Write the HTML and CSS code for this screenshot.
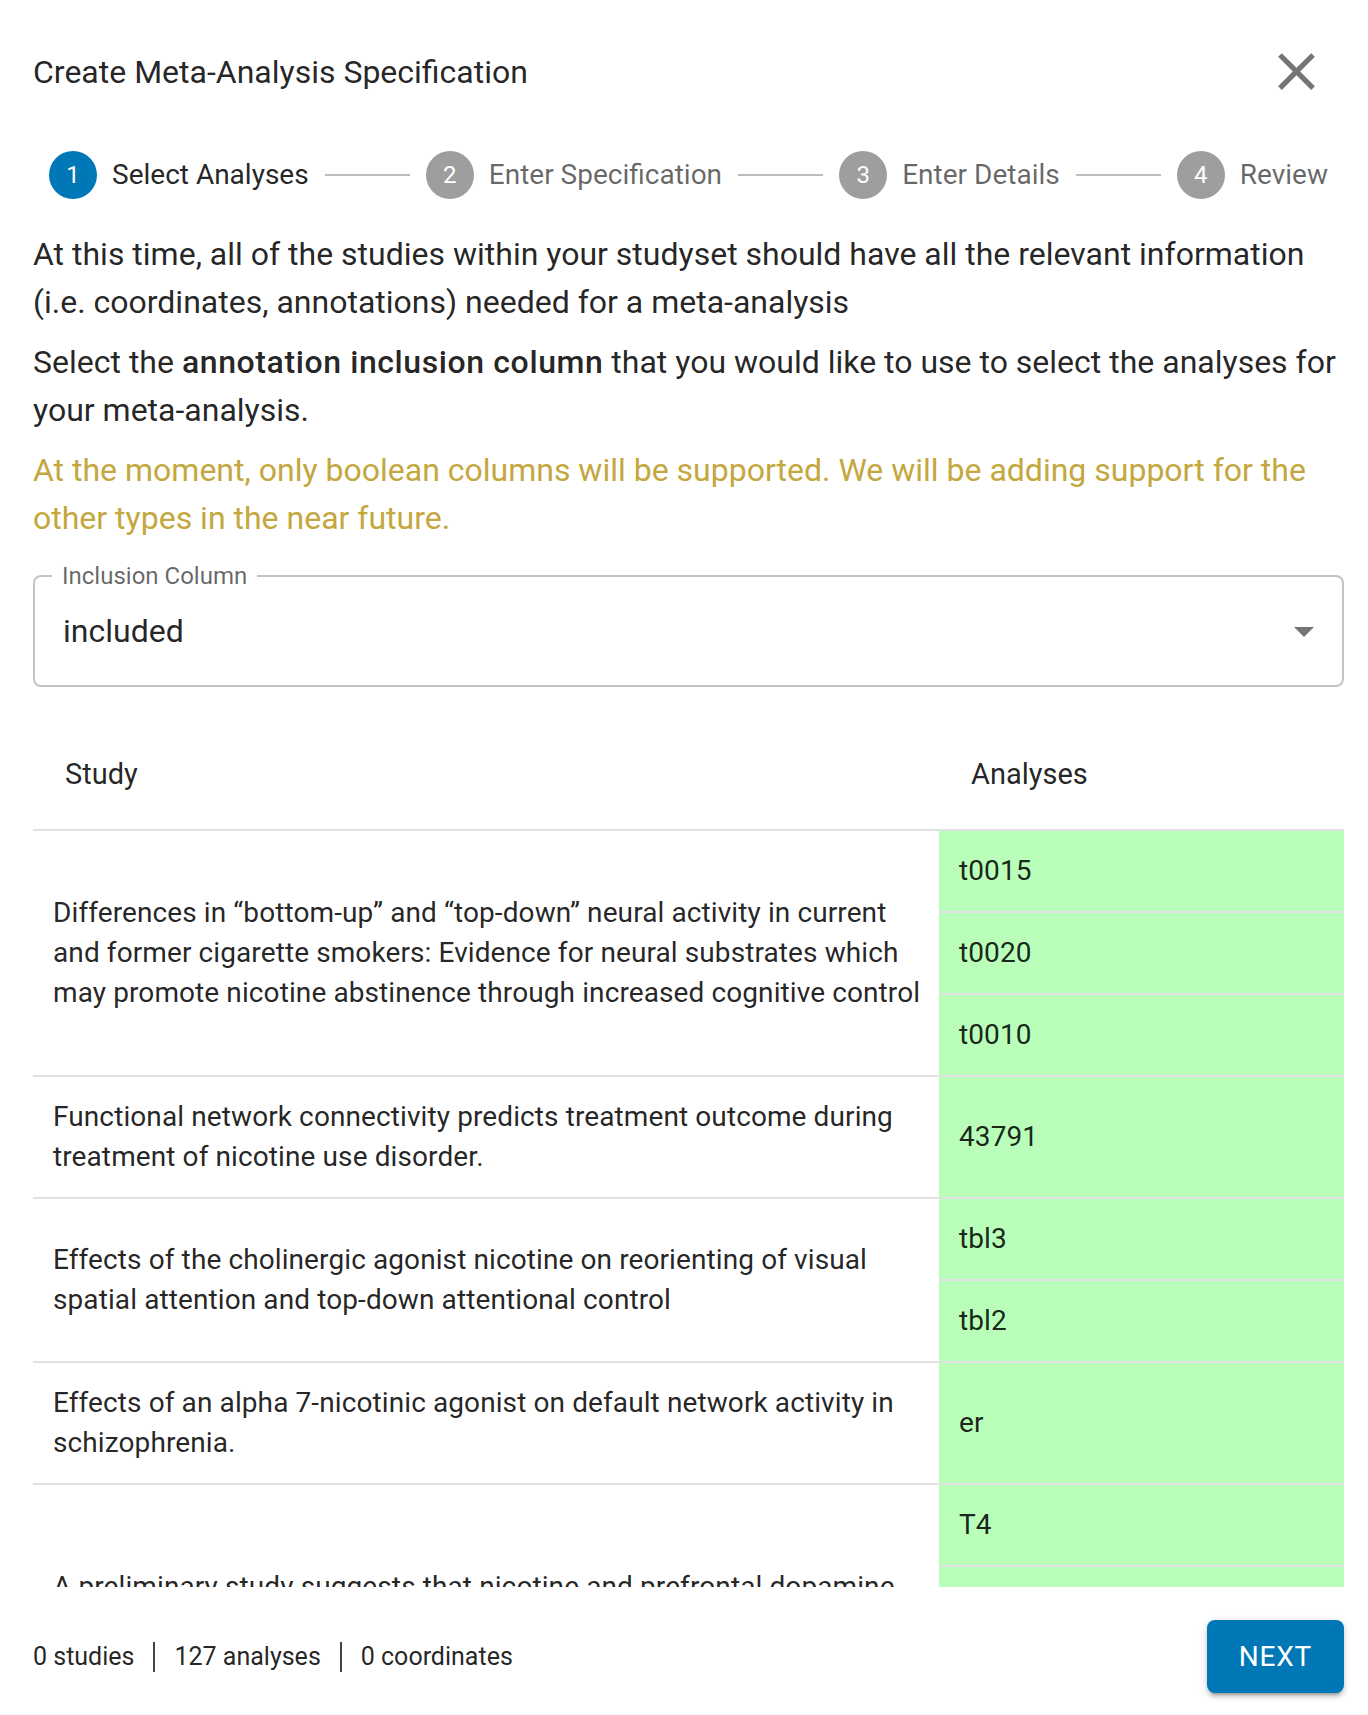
FILE: index.html
```html
<!DOCTYPE html>
<html lang="en">
<head>
<meta charset="utf-8">
<title>Create Meta-Analysis Specification</title>
<link rel="stylesheet" href="styles.css">
</head>
<body>
<div class="page">
  <header class="dialog-header">
    <h1 class="title">Create Meta-Analysis Specification</h1>
    <button class="close-btn" aria-label="close">
      <svg viewBox="0 0 24 24" width="63" height="63"><path d="M19 6.41 17.59 5 12 10.59 6.41 5 5 6.41 10.59 12 5 17.59 6.41 19 12 13.41 17.59 19 19 17.59 13.41 12z"/></svg>
    </button>
  </header>

  <div class="stepper">
    <div class="step active"><span class="step-icon">1</span><span class="step-label">Select Analyses</span></div>
    <div class="connector"></div>
    <div class="step"><span class="step-icon">2</span><span class="step-label">Enter Specification</span></div>
    <div class="connector"></div>
    <div class="step"><span class="step-icon">3</span><span class="step-label">Enter Details</span></div>
    <div class="connector"></div>
    <div class="step"><span class="step-icon">4</span><span class="step-label">Review</span></div>
  </div>

  <p class="text first">At this time, all of the studies within your studyset should have all the relevant information (i.e. coordinates, annotations) needed for a meta-analysis</p>
  <p class="text">Select the <strong>annotation inclusion column</strong> that you would like to use to select the analyses for your meta-analysis.</p>
  <p class="text warning">At the moment, only boolean columns will be supported. We will be adding support for the other types in the near future.</p>

  <div class="select">
    <span class="select-label">Inclusion Column</span>
    <span class="select-value">included</span>
    <svg class="select-arrow" viewBox="0 0 24 24" width="48" height="48"><path d="M7 10l5 5 5-5z"/></svg>
  </div>

  <div class="table-wrap">
    <table class="studies">
      <colgroup><col class="col-study"><col class="col-analyses"></colgroup>
      <thead>
        <tr><th>Study</th><th>Analyses</th></tr>
      </thead>
      <tbody>
        <tr><td class="study" rowspan="3">Differences in “bottom-up” and “top-down” neural activity in current and former cigarette smokers: Evidence for neural substrates which may promote nicotine abstinence through increased cognitive control</td><td class="analysis">t0015</td></tr>
        <tr><td class="analysis">t0020</td></tr>
        <tr><td class="analysis">t0010</td></tr>
        <tr><td class="study">Functional network connectivity predicts treatment outcome during treatment of nicotine use disorder.</td><td class="analysis">43791</td></tr>
        <tr><td class="study" rowspan="2">Effects of the cholinergic agonist nicotine on reorienting of visual spatial attention and top-down attentional control</td><td class="analysis">tbl3</td></tr>
        <tr><td class="analysis">tbl2</td></tr>
        <tr><td class="study">Effects of an alpha 7-nicotinic agonist on default network activity in schizophrenia.</td><td class="analysis">er</td></tr>
        <tr><td class="study" rowspan="3">A preliminary study suggests that nicotine and prefrontal dopamine affect cortico-striatal areas in smokers</td><td class="analysis">T4</td></tr>
        <tr><td class="analysis">T3</td></tr>
        <tr><td class="analysis">T2</td></tr>
      </tbody>
    </table>
  </div>

  <footer class="footer">
    <div class="stats">
      <span>0 studies</span><span class="sep"></span><span>127 analyses</span><span class="sep"></span><span>0 coordinates</span>
    </div>
    <button class="next">NEXT</button>
  </footer>
</div>
</body>
</html>
```

FILE: styles.css
```css
* { box-sizing: border-box; }

body {
  margin: 0;
  background: #ffffff;
  font-family: Roboto, "Noto Sans", "Liberation Sans", sans-serif;
  color: rgba(0, 0, 0, 0.87);
}

.page {
  width: 1368px;
  padding: 40px 24px 22px 33px;
}

/* header */
.dialog-header {
  display: flex;
  align-items: center;
  justify-content: space-between;
  height: 63px;
}
.title {
  margin: 0;
  font-size: 32px;
  font-weight: 400;
  line-height: 48px;
}
.close-btn {
  border: 0;
  background: none;
  padding: 0;
  width: 63px;
  height: 63px;
  margin-right: 16px;
  display: block;
}
.close-btn svg { display: block; fill: #757575; }

/* stepper */
.stepper {
  display: flex;
  align-items: center;
  height: 48px;
  margin-top: 48px;
}
.step {
  display: flex;
  align-items: center;
  padding: 0 16px;
}
.step-icon {
  width: 48px;
  height: 48px;
  border-radius: 50%;
  background: #9e9e9e;
  color: #ffffff;
  font-size: 24px;
  display: flex;
  align-items: center;
  justify-content: center;
  margin-right: 15px;
}
.step.active .step-icon { background: #0077b6; }
.step-label {
  font-size: 28px;
  line-height: 40px;
  color: rgba(0, 0, 0, 0.6);
  white-space: nowrap;
}
.step.active .step-label { color: rgba(0, 0, 0, 0.87); }
.connector {
  flex: 1;
  border-top: 2px solid #bdbdbd;
}

/* text */
.text {
  margin: 12px 0 0;
  font-size: 32px;
  line-height: 48px;
}
.text.first { margin-top: 31px; }
.text strong { font-weight: 500; letter-spacing: 0.6px; }
.text.warning { color: #c4a73e; }

/* select */
.select {
  position: relative;
  margin-top: 33px;
  height: 112px;
  border: 2px solid #c4c4c4;
  border-radius: 8px;
  display: flex;
  align-items: center;
  padding: 0 14px 0 28px;
}
.select-label {
  position: absolute;
  top: -13px;
  left: 17px;
  padding: 0 10px;
  background: #ffffff;
  font-size: 24px;
  line-height: 24px;
  color: rgba(0, 0, 0, 0.6);
}
.select-value {
  flex: 1;
  font-size: 32px;
  line-height: 46px;
}
.select-arrow { display: block; fill: rgba(0, 0, 0, 0.54); }

/* table */
.table-wrap {
  margin-top: 34px;
  height: 866px;
  overflow: hidden;
}
.studies {
  width: 100%;
  border-collapse: collapse;
  table-layout: fixed;
}
.col-study { width: 906px; }
.col-analyses { width: 405px; }
.studies th {
  text-align: left;
  font-weight: 400;
  font-size: 29px;
  line-height: 40px;
  padding: 33px 32px 35px;
  border-bottom: 2px solid #e0e0e0;
}
.studies td {
  font-size: 28px;
  line-height: 40px;
  letter-spacing: 0.1px;
  padding: 20px;
  border-bottom: 2px solid #e0e0e0;
  vertical-align: middle;
}
.studies td.study { padding-right: 10px; }
.studies td.analysis { background: #b9ffb9; }

/* footer */
.footer {
  display: flex;
  align-items: center;
  justify-content: space-between;
  margin-top: 33px;
}
.stats {
  display: flex;
  align-items: center;
  font-size: 25px;
  line-height: 32px;
  color: rgba(0, 0, 0, 0.87);
}
.sep {
  width: 2px;
  height: 30px;
  background: #444444;
  margin: 0 19px;
}
.next {
  height: 73px;
  padding: 0 32px;
  border: 0;
  border-radius: 8px;
  background: #0077b6;
  color: #ffffff;
  font-family: Roboto, "Noto Sans", sans-serif;
  font-size: 28px;
  font-weight: 400;
  letter-spacing: 0.8px;
  box-shadow: 0 6px 2px -4px rgba(0, 0, 0, 0.2), 0 4px 4px 0 rgba(0, 0, 0, 0.14), 0 2px 10px 0 rgba(0, 0, 0, 0.12);
}
```
